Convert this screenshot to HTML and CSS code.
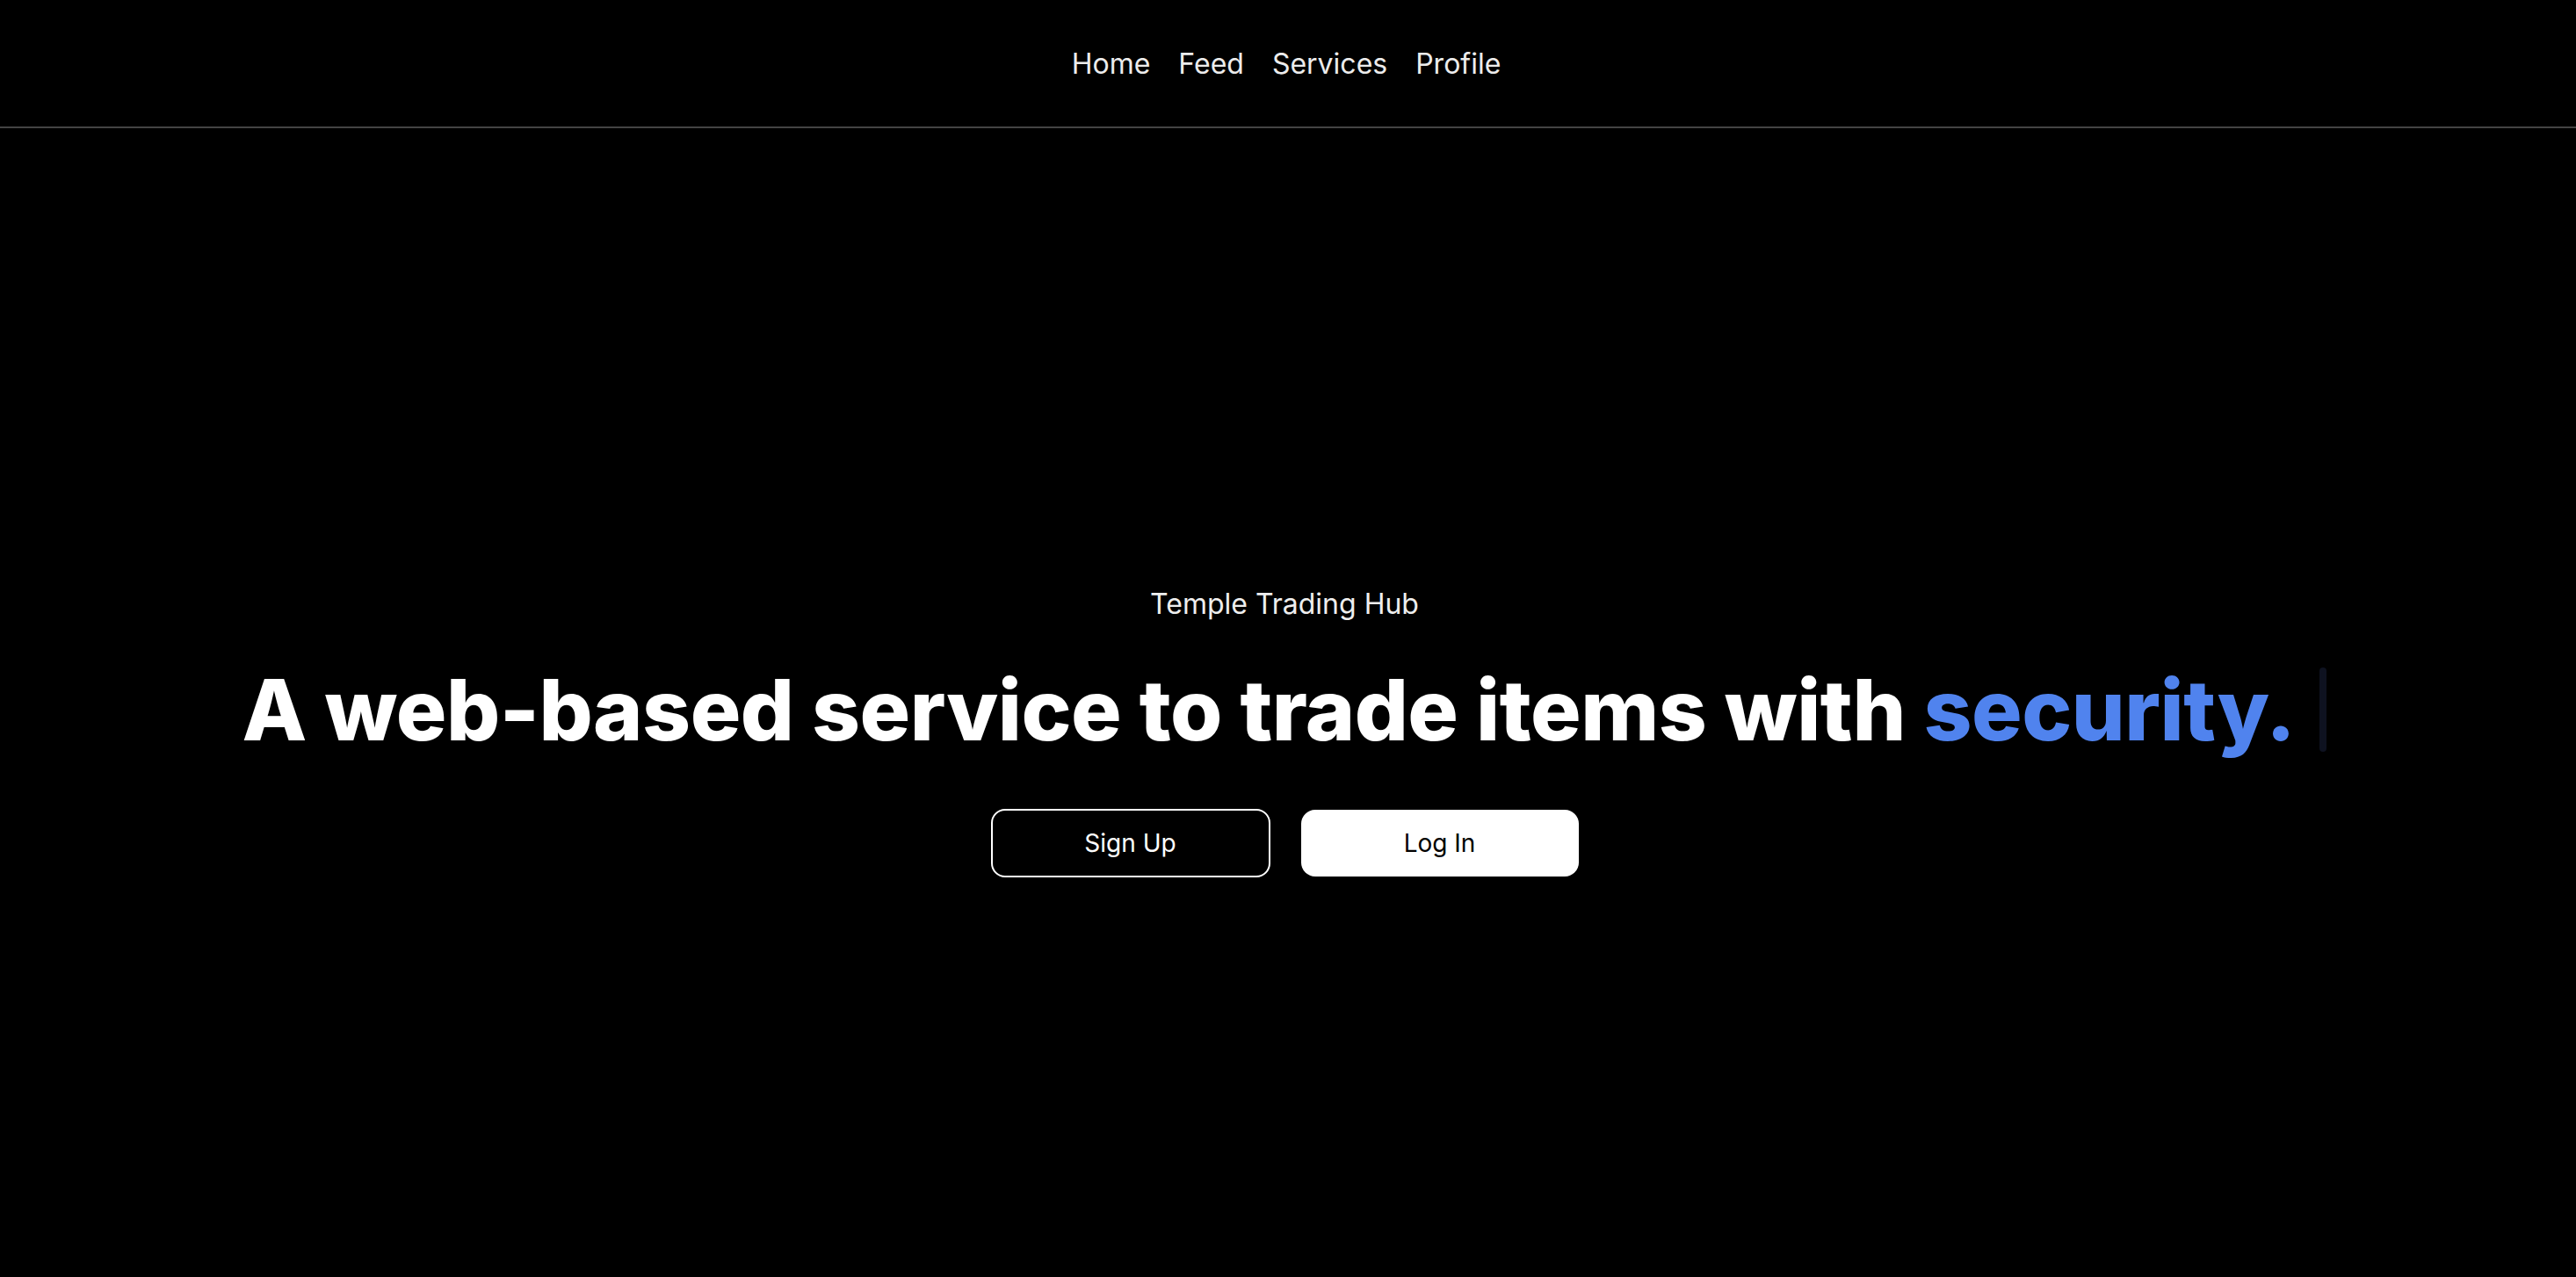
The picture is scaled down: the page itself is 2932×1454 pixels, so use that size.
FILE: index.html
```html
<!DOCTYPE html>
<html lang="en">
<head>
<meta charset="utf-8">
<title>Temple Trading Hub</title>
<link rel="stylesheet" href="styles.css">
</head>
<body>
<header class="topbar">
  <nav class="nav">
    <a class="nav-link" href="#">Home</a>
    <a class="nav-link" href="#">Feed</a>
    <a class="nav-link" href="#">Services</a>
    <a class="nav-link" href="#">Profile</a>
  </nav>
</header>
<main class="hero">
  <p class="eyebrow">Temple Trading Hub</p>
  <h1 class="headline">A web-based service to trade items with <span class="accent">security.</span><span class="cursor"></span></h1>
  <div class="actions">
    <a class="btn btn-outline" href="#">Sign Up</a>
    <a class="btn btn-solid" href="#">Log In</a>
  </div>
</main>
</body>
</html>
```
FILE: styles.css
```css
* { box-sizing: border-box; }
html, body { margin: 0; padding: 0; background: #000; }
body {
  font-family: Inter, "Noto Sans", sans-serif;
  color: #fff;
  min-height: 1454px;
}
.topbar {
  height: 146px;
  border-bottom: 2px solid #444;
  display: flex;
  align-items: center;
  justify-content: center;
  padding-right: 4px;
}
.nav {
  display: flex;
  gap: 32px;
}
.nav-link {
  color: #ececec;
  text-decoration: none;
  font-size: 32px;
  line-height: 39px;
}
.hero {
  display: flex;
  flex-direction: column;
  align-items: center;
  padding-top: 523px;
  padding-right: 8px;
}
.eyebrow {
  margin: 0;
  font-size: 32px;
  line-height: 38px;
  color: #eee;
}
.headline {
  margin: 44px 0 0;
  font-size: 96px;
  line-height: 115px;
  font-weight: 800;
  letter-spacing: -0.005em;
  white-space: nowrap;
}
.accent { color: #5083ee; }
.cursor {
  display: inline-block;
  width: 8px;
  height: 96px;
  margin-left: 28px;
  border-radius: 4px;
  background: #0e1220;
  vertical-align: -13px;
}
.actions {
  display: flex;
  align-items: center;
  gap: 34px;
  margin-top: 55px;
}
.btn {
  display: flex;
  align-items: center;
  justify-content: center;
  text-decoration: none;
  font-size: 28px;
  border-radius: 16px;
}
.btn-outline {
  width: 318px;
  height: 78px;
  border: 2px solid #fff;
  color: #fff;
  background: #000;
}
.btn-solid {
  width: 316px;
  height: 76px;
  margin-left: 1px;
  background: #fff;
  color: #000;
}
```
